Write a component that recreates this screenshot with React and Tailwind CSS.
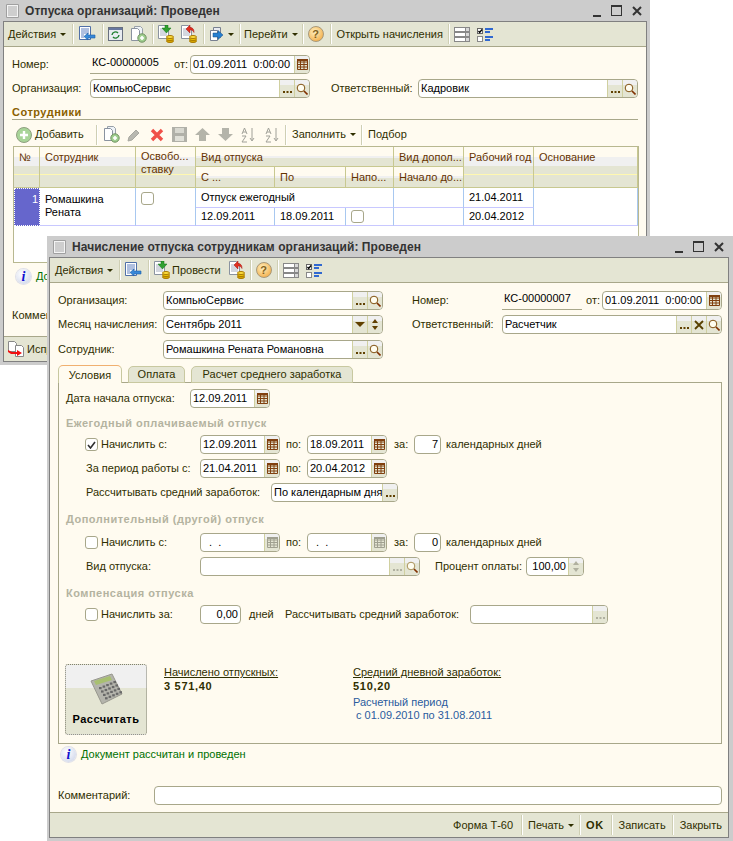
import React from "react";

const Doc = ({ x = 0, y = 0, fill = "#fff" }) => (
  <g transform={`translate(${x} ${y})`}>
    <path d="M.5.5h7l3 3v10H.5z" fill={fill} stroke="#8a93a0" />
    <path d="M2 4h5M2 6h7M2 8h7M2 10h7" stroke="#a8b0c0" />
  </g>
);
const Coins = ({ x = 8, y = 10 }) => (
  <g transform={`translate(${x} ${y})`}>
    <ellipse cx="4" cy="6" rx="3.5" ry="1.5" fill="#d8a800" stroke="#a87800" />
    <ellipse cx="4" cy="4" rx="3.5" ry="1.5" fill="#f0c800" stroke="#a87800" />
    <ellipse cx="4" cy="2" rx="3.5" ry="1.5" fill="#ffe040" stroke="#a87800" />
  </g>
);
const IconBack = () => (
  <svg width="17" height="16" viewBox="0 0 17 16">
    <path d="M.5.5h11v13H.5z" fill="#fff" stroke="#5070a8" />
    <path d="M2 3h8M2 5h8M2 7h8M2 9h3M2 11h3" stroke="#6080c0" />
    <path d="M5 10.5l4-3.5v2h7v3H9v2z" fill="#3888d8" stroke="#1860a8" strokeWidth=".6" />
  </svg>
);
const IconRefresh = () => (
  <svg width="15" height="14" viewBox="0 0 15 14">
    <rect x=".5" y=".5" width="14" height="13" fill="#e8ecf0" stroke="#687080" />
    <rect x="1" y="1" width="13" height="2" fill="#6878a0" />
    <path d="M4 8a3.5 3.5 0 016-2M11 8a3.5 3.5 0 01-6 2" fill="none" stroke="#208030" strokeWidth="1.4" />
  </svg>
);
const IconDocPlus = () => (
  <svg width="16" height="17" viewBox="0 0 16 17">
    <path d="M3.5 .5h6l2 2v10h-8z" fill="#eef2f6" stroke="#98a0a8" />
    <path d="M.5 2.5h6l2 2v10h-8z" fill="#fff" stroke="#8a93a0" />
    <circle cx="11" cy="12" r="4.2" fill="#a0d090" stroke="#709060" />
    <path d="M9 12h4M11 10v4" stroke="#fff" strokeWidth="1.6" />
  </svg>
);
const IconCoinGreen = () => (
  <svg width="16" height="18" viewBox="0 0 16 18">
    <Doc />
    <path d="M7 0h3v3h3l-4.5 5L4 3h3z" fill="#30a030" stroke="#107010" strokeWidth=".5" />
    <Coins />
  </svg>
);
const IconCoinRed = () => (
  <svg width="16" height="18" viewBox="0 0 16 18">
    <Doc />
    <path d="M5 4l4-4v2.5c3 0 4 2 4 5-1-2-2-2.5-4-2.5V8z" fill="#e03020" stroke="#a01010" strokeWidth=".5" />
    <Coins />
  </svg>
);
const IconForward = () => (
  <svg width="14" height="15" viewBox="0 0 14 15">
    <path d="M3.5 .5h7v10h-7z" fill="#e8eaf0" stroke="#788090" />
    <path d="M.5 3.5h7v10h-7z" fill="#fff" stroke="#788090" />
    <path d="M3 6l5 0V3.5l5 4.5-5 4.5V10H3z" fill="#2880d0" stroke="#104880" strokeWidth=".5" />
  </svg>
);
const IconHelp = () => (
  <span className="relative flex h-[16px] w-[16px] items-center justify-center rounded-full border border-[#a89878] bg-[radial-gradient(circle_at_40%_35%,#fff0c0,#f0a030)] text-[11px] font-bold leading-none text-[#806020]">?</span>
);
const IconRows = () => (
  <svg width="16" height="15" viewBox="0 0 16 15">
    {[0, 5, 10].map((y) => (
      <g key={y}>
        <rect x="0" y={y} width="16" height="5" fill="#888" />
        <rect x="1" y={y + 1} width="10" height="3" fill="#fff" />
        <rect x="12" y={y + 1} width="3" height="3" fill="#d8d8d8" />
      </g>
    ))}
  </svg>
);
const IconCheckList = () => (
  <svg width="16" height="15" viewBox="0 0 16 15">
    <rect x=".5" y="1.5" width="5" height="5" fill="#fff" stroke="#666" />
    <path d="M1.5 4l1.2 1.5L5 2.5" fill="none" stroke="#000" strokeWidth="1.3" />
    <rect x=".5" y="9.5" width="5" height="5" fill="#fff" stroke="#888" />
    <path d="M8 1h8v2H8zM8 4h5v2H8zM8 9h8v2H8zM8 12h5v2H8z" fill="#3068d0" />
  </svg>
);
const IconCal = ({ dim }) => (
  <svg width="11" height="11" viewBox="0 0 11 11">
    <path d="M.5.5h10v10H.5z M.5 3h10M.5 5.5h10M.5 8h10M3.5.5v10M7 .5v10" fill="none" stroke={dim ? "#a0a090" : "#80400f"} />
    <path d="M0 0h11v2H0z" fill={dim ? "#a0a090" : "#80400f"} />
  </svg>
);
const IconMag = ({ dim }) => (
  <svg width="12" height="12" viewBox="0 0 12 12">
    <circle cx="5" cy="5" r="3.8" fill="#fffdf0" stroke={dim ? "#a89058" : "#805010"} />
    <path d="M8 8l3.5 3.500" stroke="#803000" strokeWidth="1.6" />
  </svg>
);
const IconDots = ({ dim }) => (
  <svg width="11" height="11" viewBox="0 0 11 11">
    <path d="M1 8h2v2H1zM4.500 8h2v2h-2zM8 8h2v2H8z" fill={dim ? "#b0b0a0" : "#604000"} />
  </svg>
);
const IconX = () => (
  <svg width="10" height="10" viewBox="0 0 10 10">
    <path d="M1 1l8 8M9 1l-8 8" stroke="#584000" strokeWidth="1.8" />
  </svg>
);
const IconInfo = () => (
  <span className="flex h-[15px] w-[15px] items-center justify-center rounded-full bg-[radial-gradient(circle_at_40%_35%,#ffffff,#c8d0e8)] font-['Liberation_Serif',serif] text-[14px] font-bold italic leading-none text-[#1010d0] shadow-[0_0_0_1px_#e0e0e8]">i</span>
);
const IconAdd = () => (
  <svg width="16" height="16" viewBox="0 0 16 16">
    <circle cx="8" cy="8" r="7.5" fill="#a8d498" stroke="#90a080" />
    <path d="M4 8h8M8 4v8" stroke="#fff" strokeWidth="2.4" />
  </svg>
);
const IconPencil = () => (
  <svg width="14" height="14" viewBox="0 0 14 14">
    <path d="M1 13l1-4 7-7 3 3-7 7z" fill="#b8b8b0" stroke="#a8a8a0" />
  </svg>
);
const IconDel = () => (
  <svg width="14" height="14" viewBox="0 0 14 14">
    <path d="M2 2l10 10M12 2L2 12" stroke="#f05048" strokeWidth="3.4" />
  </svg>
);
const IconSave = () => (
  <svg width="15" height="15" viewBox="0 0 15 15">
    <path d="M0 0h15v15H0z" fill="#b0b0a8" />
    <path d="M3 1h9v5H3z" fill="#d8d8d0" />
    <path d="M3 9h9v5H3z" fill="#e0e0d8" />
  </svg>
);
const IconUp = ({ down }) => (
  <svg width="15" height="13" viewBox="0 0 15 13">
    <path d={down ? "M4 0h7v6h4l-7.500 7L0 6h4z" : "M4 13h7V7h4L7.500 0 0 7h4z"} fill="#b4b4aa" />
  </svg>
);
const IconSort = ({ rev }) => (
  <svg width="14" height="16" viewBox="0 0 14 16">
    <path d={rev ? "M11 1v12M9 11l2 3 2-3" : "M11 3v12M9 5l2-3 2 3"} transform={rev ? "" : "rotate(180 11 8)"} fill="none" stroke="#a0a098" />
    <path d="M1 7l2.500-6L6 7M2 5h3M1 9h4L1 15h5" fill="none" stroke="#a0a098" />
  </svg>
);
const IconTransfer = () => (
  <svg width="16" height="16" viewBox="0 0 16 16">
    <path d="M.5.5h6l2 2v8h-8z" fill="#fff" stroke="#888" />
    <path d="M7.500 4.500h6l2 2v9h-8z" fill="#fff" stroke="#888" />
    <path d="M0 9l4 2h5V9l5 3-5 3v-2H3L0 11z" fill="#f01010" />
  </svg>
);
const Caret = () => (
  <span className="ml-[4px] h-0 w-0 border-x-[3px] border-t-[3px] border-x-transparent border-t-[#2f2f00]" />
);
const Sep = ({ l = 5, r = 5 }) => (
  <span className="h-[20px] w-[2px] shrink-0 bg-[linear-gradient(90deg,#cfcfb4_50%,#ffffff_50%)]" style={{ marginLeft: l, marginRight: r }} />
);

const BtnCell = ({ children, last }) => (
  <span className={`flex h-full w-[15px] shrink-0 items-center justify-center border-l border-[#d0d0a0] bg-[linear-gradient(#f0f0f0_0,#f0f0f0_30%,#e4e5d3_30%)] ${last ? "rounded-r-[3px]" : ""}`}>{children}</span>
);
const Field = ({ w, text, btns = [], right, dim, pre, className = "" }) => (
  <span className={`flex h-[19px] shrink-0 items-center overflow-hidden rounded-[4px] border border-[#a8a78a] bg-white text-black ${className}`} style={{ width: w }}>
    <span className={`min-w-0 flex-1 overflow-hidden px-[2px] ${pre ? "whitespace-pre" : "whitespace-nowrap"} ${right ? "text-right" : ""}`}>{text}</span>
    {btns.map((b, i) => (
      <BtnCell key={i} last={i === btns.length - 1}>
        {b === "dots" && <IconDots dim={dim} />}
        {b === "mag" && <IconMag dim={dim} />}
        {b === "cal" && <IconCal dim={dim} />}
        {b === "x" && <IconX />}
        {b === "drop" && <span className="h-0 w-0 border-x-[5px] border-t-[5px] border-x-transparent border-t-[#604000]" />}
        {b === "spin" && (
          <span className="flex flex-col gap-[3px]">
            <span className={`h-0 w-0 border-x-[3.500px] border-b-[4px] border-x-transparent ${dim ? "border-b-[#b0b0a0]" : "border-b-[#604000]"}`} />
            <span className={`h-0 w-0 border-x-[3.500px] border-t-[4px] border-x-transparent ${dim ? "border-t-[#b0b0a0]" : "border-t-[#604000]"}`} />
          </span>
        )}
      </BtnCell>
    ))}
  </span>
);
const NumberField = ({ text }) => (
  <span className="flex h-[19px] w-[80px] shrink-0 items-center border-b border-[#a8a78a] pb-[3px] pl-[2px] text-black">{text}</span>
);
const Check = ({ on }) => (
  <span className="flex h-[13px] w-[13px] shrink-0 items-center justify-center rounded-[3px] border border-[#a8a78a] bg-white">
    {on && (
      <svg width="9" height="8" viewBox="0 0 9 8">
        <path d="M1 4l2.500 3L8 1" fill="none" stroke="#303030" strokeWidth="1.600" />
      </svg>
    )}
  </span>
);
const Caption = ({ children, tone = "gray" }) => (
  <div className={`whitespace-nowrap text-[11px] font-bold tracking-[0.5px] ${tone === "gray" ? "text-[#b4b3a0]" : "text-[#8a6000]"}`}>{children}</div>
);
const TitleBar = ({ title, pad }) => (
  <div className={`flex h-[21px] shrink-0 items-center bg-[#cccccc] pl-[6px] ${pad}`}>
    <svg width="13" height="14" viewBox="0 0 13 14" className="mr-[6px] shrink-0">
      <path d="M.5.500h12v13H.5z" fill="#f4f4f4" stroke="#a0a0a0" />
      <path d="M2 3h9M2 5h9M2 7h9M2 9h9M2 11h9" stroke="#a8a8a8" />
    </svg>
    <span className="whitespace-nowrap text-[12px] font-bold tracking-[0.06px] text-[#333333]">{title}</span>
    <span className="ml-auto flex items-center gap-[10px]">
      <span className="mt-[10px] h-[2px] w-[8px] bg-[#333333]" />
      <span className="h-[11px] w-[11px] border border-t-2 border-[#333333]" />
      <svg width="10" height="10" viewBox="0 0 10 10">
        <path d="M1 1l8 8M9 1l-8 8" stroke="#333333" strokeWidth="2" />
      </svg>
    </span>
  </div>
);
const hdrTall = "bg-[linear-gradient(#fffbf0_0,#fffbf0_10px,#f0f0f0_10px,#f0f0f0_19px,#e4e5d3_19px,#e4e5d3_27px,#fff8b0_27px,#fff8b0_28px,#e4e5d3_28px)]";
const hdrShort = "bg-[linear-gradient(#fffbf0_0,#fffbf0_9px,#f0f0f0_9px,#f0f0f0_11px,#e4e5d3_11px)]";
const Hc = ({ children, cls = "" }) => (
  <div className={`overflow-hidden whitespace-nowrap border-b border-r border-[#c8c890] pl-[5px] pt-[2px] text-[#663300] ${cls}`}>{children}</div>
);
const HLine = ({ children }) => <span className="block leading-[16px]">{children}</span>;
const Dc = ({ children, cls = "" }) => (
  <div className={`overflow-hidden whitespace-nowrap border-r border-b border-b-[#c8c8ff] border-r-[#a8c8f0] pl-[5px] text-black ${cls}`}>{children}</div>
);
const RowLabel = ({ w, children, cls = "" }) => (
  <span className={`shrink-0 whitespace-nowrap ${cls}`} style={{ width: w }}>{children}</span>
);

export default function App() {
  return (
    <div className="relative h-[841px] w-[733px] overflow-hidden bg-white font-['Liberation_Sans',sans-serif] text-[11px] text-[#2f2f00]">
      {/* Первое окно */}
      <section className="absolute left-0 top-0 flex h-[365px] w-[650px] flex-col bg-[#cccccc]">
        <TitleBar title="Отпуска организаций: Проведен" pad="pr-[8px]" />
        <div className="mx-[3px] mb-[3px] flex min-h-0 flex-1 flex-col border border-[#808080] bg-[#fffbf0]">
          <div className="flex h-[25px] shrink-0 items-center border-b border-[#a8a78a] bg-[#e4e5d3] pl-[3px]">
            <span className="flex w-[61px] items-center whitespace-nowrap pl-[1px]">Действия<Caret /></span>
            <Sep l={4} r={5} />
            <IconBack />
            <Sep l={6} r={4} />
            <IconRefresh />
            <span className="w-[8px]" />
            <IconDocPlus />
            <Sep l={5} r={4} />
            <IconCoinGreen />
            <span className="w-[7px]" />
            <IconCoinRed />
            <Sep l={6} r={5} />
            <IconForward />
            <Caret />
            <Sep l={5} r={3} />
            <span className="flex items-center whitespace-nowrap">Перейти<Caret /></span>
            <Sep l={4} r={4} />
            <IconHelp />
            <Sep l={6} r={5} />
            <span className="whitespace-nowrap">Открыть начисления</span>
            <Sep l={5} r={4} />
            <IconRows />
            <span className="w-[7px]" />
            <IconCheckList />
          </div>
          <div className="pl-[8px] pr-[8px]">
            <div className="mt-[8px] flex h-[19px] items-center">
              <RowLabel w={78}>Номер:</RowLabel>
              <NumberField text="КС-00000005" />
              <RowLabel w={16} cls="ml-[4px]">от:</RowLabel>
              <Field w={120} text="01.09.2011  0:00:00" btns={["cal"]} pre />
            </div>
            <div className="mt-[5px] flex h-[19px] items-center">
              <RowLabel w={78}>Организация:</RowLabel>
              <Field w={220} text="КомпьюСервис" btns={["dots", "mag"]} />
              <RowLabel w={87} cls="ml-[21px]">Ответственный:</RowLabel>
              <Field w={220} text="Кадровик" btns={["dots", "mag"]} />
            </div>
            <div className="mt-[8px] w-[626px] border-b border-[#a8a78a] pb-[1px] leading-[12px]">
              <Caption tone="brown">Сотрудники</Caption>
            </div>
            <div className="mt-[5px] flex h-[19px] items-center pl-[4px]">
              <IconAdd />
              <span className="ml-[3px] w-[52px] whitespace-nowrap"><span className="underline">Д</span>обавить</span>
              <Sep l={9} r={6} />
              <IconDocPlus />
              <span className="w-[7px]" />
              <IconPencil />
              <span className="w-[9px]" />
              <IconDel />
              <span className="w-[8px]" />
              <IconSave />
              <span className="w-[8px]" />
              <IconUp />
              <span className="w-[8px]" />
              <IconUp down />
              <span className="w-[8px]" />
              <IconSort />
              <span className="w-[10px]" />
              <IconSort rev />
              <Sep l={6} r={5} />
              <span className="flex items-center whitespace-nowrap">Заполнить<Caret /></span>
              <Sep l={5} r={5} />
              <span>Подбор</span>
            </div>
            <div className="ml-[1px] mt-[2px] h-[117px] w-[626px] border border-[#b8b890] bg-white">
              <div className="grid grid-cols-[26px_96px_60px_79px_71px_48px_70px_70px_104px] grid-rows-[20px_21px_20px_18px] text-[11px]">
                <Hc cls={`row-span-2 ${hdrTall}`}><HLine>№</HLine></Hc>
                <Hc cls={`row-span-2 ${hdrTall}`}><HLine>Сотрудник</HLine></Hc>
                <Hc cls={`row-span-2 ${hdrTall}`}><span className="block pt-[1px] leading-[13px]">Освобо...</span><span className="block leading-[13px]">ставку</span></Hc>
                <Hc cls={`col-span-3 ${hdrShort}`}><HLine>Вид отпуска</HLine></Hc>
                <Hc cls={hdrShort}><HLine>Вид допол...</HLine></Hc>
                <Hc cls={`row-span-2 ${hdrTall}`}><HLine>Рабочий год</HLine></Hc>
                <Hc cls={`row-span-2 ${hdrTall}`}><HLine>Основание</HLine></Hc>
                <Hc cls={hdrShort}><HLine>С ...</HLine></Hc>
                <Hc cls={hdrShort}><HLine>По</HLine></Hc>
                <Hc cls={hdrShort}><HLine>Напо...</HLine></Hc>
                <Hc cls={hdrShort}><HLine>Начало до...</HLine></Hc>

                <div className="row-span-2 border border-dotted border-white bg-[#6666cc] pr-[1px] pt-[4px] text-right leading-[13px] text-white">1</div>
                <Dc cls="row-span-2 whitespace-normal pt-[5px] leading-[13px]">Ромашкина<br />Рената</Dc>
                <Dc cls="row-span-2 pt-[4px]"><Check /></Dc>
                <Dc cls="col-span-3 flex items-center">Отпуск ежегодный</Dc>
                <Dc />
                <Dc cls="flex items-center">21.04.2011</Dc>
                <Dc cls="row-span-2" />
                <Dc cls="flex items-center">12.09.2011</Dc>
                <Dc cls="flex items-center">18.09.2011</Dc>
                <Dc cls="flex items-center"><Check /></Dc>
                <Dc />
                <Dc cls="flex items-center">20.04.2012</Dc>
              </div>
            </div>
            <div className="mt-[6px] flex h-[15px] items-center pl-[4px]">
              <IconInfo />
              <span className="ml-[5px] whitespace-nowrap text-[#007000]">Документ рассчитан и проведен</span>
            </div>
            <div className="mt-[25px] leading-[13px]">Комментарий:</div>
          </div>
          <div className="mt-auto flex h-[25px] shrink-0 items-center border-t border-[#a8a78a] bg-[#e4e5d3] pl-[4px]">
            <IconTransfer />
            <span className="ml-[3px] whitespace-nowrap">Исправить</span>
          </div>
        </div>
      </section>

      {/* Второе окно */}
      <section className="absolute left-[47px] top-[236px] flex h-[605px] w-[686px] flex-col bg-[#cccccc]">
        <TitleBar title="Начисление отпуска сотрудникам организаций: Проведен" pad="pr-[9px]" />
        <div className="mb-[3px] ml-[2px] mr-[4px] flex min-h-0 flex-1 flex-col border border-[#808080] bg-[#fffbf0]">
          <div className="flex h-[25px] shrink-0 items-center border-b border-[#a8a78a] bg-[#e4e5d3] pl-[5px]">
            <span className="flex w-[60px] items-center whitespace-nowrap">Действия<Caret /></span>
            <Sep l={4} r={4} />
            <IconBack />
            <Sep l={6} r={4} />
            <IconCoinGreen />
            <span className="ml-[2px] whitespace-nowrap">Провести</span>
            <span className="w-[8px]" />
            <IconCoinRed />
            <Sep l={5} r={4} />
            <IconHelp />
            <Sep l={5} r={4} />
            <IconRows />
            <span className="w-[7px]" />
            <IconCheckList />
          </div>

          <div className="flex min-h-0 flex-1 flex-col pl-[8px] pr-[6px]">
            <div className="mt-[8px] flex h-[19px] items-center">
              <RowLabel w={105}>Организация:</RowLabel>
              <Field w={220} text="КомпьюСервис" btns={["dots", "mag"]} />
              <RowLabel w={90} cls="ml-[29px]">Номер:</RowLabel>
              <NumberField text="КС-00000007" />
              <RowLabel w={16} cls="ml-[4px]">от:</RowLabel>
              <Field w={120} text="01.09.2011  0:00:00" btns={["cal"]} pre />
            </div>
            <div className="mt-[5px] flex h-[19px] items-center">
              <RowLabel w={105}>Месяц начисления:</RowLabel>
              <Field w={220} text="Сентябрь 2011" btns={["drop", "spin"]} />
              <RowLabel w={90} cls="ml-[29px]">Ответственный:</RowLabel>
              <Field w={220} text="Расчетчик" btns={["dots", "x", "mag"]} />
            </div>
            <div className="mt-[6px] flex h-[19px] items-center">
              <RowLabel w={105}>Сотрудник:</RowLabel>
              <Field w={220} text="Ромашкина Рената Романовна" btns={["dots", "mag"]} />
            </div>

            <div className="relative z-10 mt-[6px] flex h-[18px] items-end pl-0">
              <span className="flex h-[18px] w-[64px] items-center justify-center rounded-t-[5px] border border-b-0 border-[#c8c8a0] border-t-[#f0b070] bg-[#fffbf0] pt-[1px]">Условия</span>
              <span className="ml-[6px] flex h-[17px] w-[57px] items-center justify-center rounded-t-[5px] border border-[#c8c8a0] bg-[#e4e5d3]">Оплата</span>
              <span className="ml-[6px] flex h-[17px] w-[162px] items-center justify-center rounded-t-[5px] border border-[#c8c8a0] bg-[#e4e5d3]">Расчет среднего заработка</span>
            </div>
            <div className="-mt-[1px] flex h-[362px] w-[664px] shrink-0 flex-col border border-[#a8a78a] pl-[7px]">
              <div className="mt-[6px] flex h-[19px] items-center">
                <RowLabel w={124}>Дата начала отпуска:</RowLabel>
                <Field w={80} text="12.09.2011" btns={["cal"]} />
              </div>
              <div className="mt-[9px] leading-[13px]"><Caption>Ежегодный оплачиваемый отпуск</Caption></div>
              <div className="mt-[5px] flex h-[19px] items-center pl-[19px]">
                <Check on />
                <RowLabel w={99} cls="ml-[3px]">Начислить с:</RowLabel>
                <Field w={80} text="12.09.2011" btns={["cal"]} />
                <RowLabel w={21} cls="ml-[6px]">по:</RowLabel>
                <Field w={80} text="18.09.2011" btns={["cal"]} />
                <RowLabel w={20} cls="ml-[7px]">за:</RowLabel>
                <Field w={27} text="7" right />
                <RowLabel w={100} cls="ml-[5px]">календарных дней</RowLabel>
              </div>
              <div className="mt-[5px] flex h-[19px] items-center pl-[20px]">
                <RowLabel w={114}>За период работы с:</RowLabel>
                <Field w={80} text="21.04.2011" btns={["cal"]} />
                <RowLabel w={21} cls="ml-[6px]">по:</RowLabel>
                <Field w={80} text="20.04.2012" btns={["cal"]} />
              </div>
              <div className="mt-[5px] flex h-[19px] items-center pl-[20px]">
                <RowLabel w={185}>Рассчитывать средний заработок:</RowLabel>
                <Field w={127} text="По календарным дням" btns={["dots"]} />
              </div>
              <div className="mt-[11px] leading-[13px]"><Caption>Дополнительный (другой) отпуск</Caption></div>
              <div className="mt-[7px] flex h-[19px] items-center pl-[19px]">
                <Check />
                <RowLabel w={99} cls="ml-[3px]">Начислить с:</RowLabel>
                <Field w={80} text="  .  ." btns={["cal"]} dim pre className="bg-[#fffbf0]" />
                <RowLabel w={21} cls="ml-[6px]">по:</RowLabel>
                <Field w={80} text="  .  ." btns={["cal"]} dim pre className="bg-[#fffbf0]" />
                <RowLabel w={20} cls="ml-[7px]">за:</RowLabel>
                <Field w={27} text="0" right className="bg-[#fffbf0]" />
                <RowLabel w={100} cls="ml-[5px]">календарных дней</RowLabel>
              </div>
              <div className="mt-[5px] flex h-[19px] items-center pl-[20px]">
                <RowLabel w={114}>Вид отпуска:</RowLabel>
                <Field w={220} text="" btns={["dots", "mag"]} dim className="bg-[#fffbf0]" />
                <RowLabel w={91} cls="ml-[15px]">Процент оплаты:</RowLabel>
                <Field w={58} text="100,00" right btns={["spin"]} dim />
              </div>
              <div className="mt-[11px] leading-[13px]"><Caption>Компенсация отпуска</Caption></div>
              <div className="mt-[5px] flex h-[19px] items-center pl-[19px]">
                <Check />
                <RowLabel w={99} cls="ml-[3px]">Начислить за:</RowLabel>
                <Field w={41} text="0,00" right className="bg-[#fffbf0]" />
                <RowLabel w={36} cls="ml-[8px]">дней</RowLabel>
                <RowLabel w={185}>Рассчитывать средний заработок:</RowLabel>
                <Field w={138} text="" btns={["dots"]} dim className="bg-[#fffbf0]" />
              </div>
              <div className="mt-[40px] flex">
                <div className="-ml-[1px] flex h-[71px] w-[82px] shrink-0 flex-col items-center rounded-[3px] border border-dotted border-[#808070] bg-[linear-gradient(#f0f0f0_0,#f0f0f0_33%,#e4e5d3_33%)]">
                  <svg width="34" height="32" viewBox="0 0 34 32" className="mt-[8px]">
                    <path d="M2 8L23 1l10 20-20 10z" fill="#b4b4ac" stroke="#98988e" />
                    <path d="M5 8l16-5 2 4-16 5z" fill="#a8c070" />
                    {[0, 1, 2, 3].map((r) =>
                      [0, 1, 2, 3, 4].map((c) => (
                        <rect key={`${r}-${c}`} x={10 + c * 3.6 + r * 2} y={14 - c * 1.500 + r * 3.4} width="2.600" height="2.200" fill="#686868" />
                      ))
                    )}
                  </svg>
                  <span className="mt-[6px] whitespace-nowrap text-[11px] font-bold tracking-[0.5px] text-black">Рассчитать</span>
                </div>
                <div className="ml-[17px] w-[189px] pt-[2px]">
                  <div className="leading-[13px] underline">Начислено отпускных:</div>
                  <div className="mt-[1px] text-[11px] font-bold leading-[13px] tracking-[0.7px]">3 571,40</div>
                </div>
                <div className="pt-[2px]">
                  <div className="leading-[13px] underline">Средний дневной заработок:</div>
                  <div className="mt-[1px] text-[11px] font-bold leading-[13px] tracking-[0.7px]">510,20</div>
                  <div className="mt-[3px] leading-[13px] text-[#2b5c9e]">Расчетный период</div>
                  <div className="pl-[3px] leading-[13px] text-[#2b5c9e]">с 01.09.2010 по 31.08.2011</div>
                </div>
              </div>
            </div>
            <div className="mt-[3px] flex h-[15px] items-center pl-[3px]">
              <IconInfo />
              <span className="ml-[5px] whitespace-nowrap text-[#007000]">Документ рассчитан и проведен</span>
            </div>
            <div className="mt-[24px] flex h-[19px] items-center">
              <RowLabel w={96}>Комментарий:</RowLabel>
              <Field w={568} text="" />
            </div>
          </div>

          <div className="mt-auto flex h-[25px] shrink-0 items-center justify-end border-t border-[#a8a78a] bg-[#e4e5d3] pr-[6px]">
            <span className="whitespace-nowrap">Форма Т-60</span>
            <Sep l={8} r={5} />
            <span className="flex items-center whitespace-nowrap">Печать<Caret /></span>
            <Sep l={5} r={5} />
            <span className="font-bold tracking-[0.5px]">OK</span>
            <Sep l={7} r={6} />
            <span className="whitespace-nowrap">Записать</span>
            <Sep l={6} r={6} />
            <span className="whitespace-nowrap">Закрыть</span>
          </div>
        </div>
      </section>
    </div>
  );
}
